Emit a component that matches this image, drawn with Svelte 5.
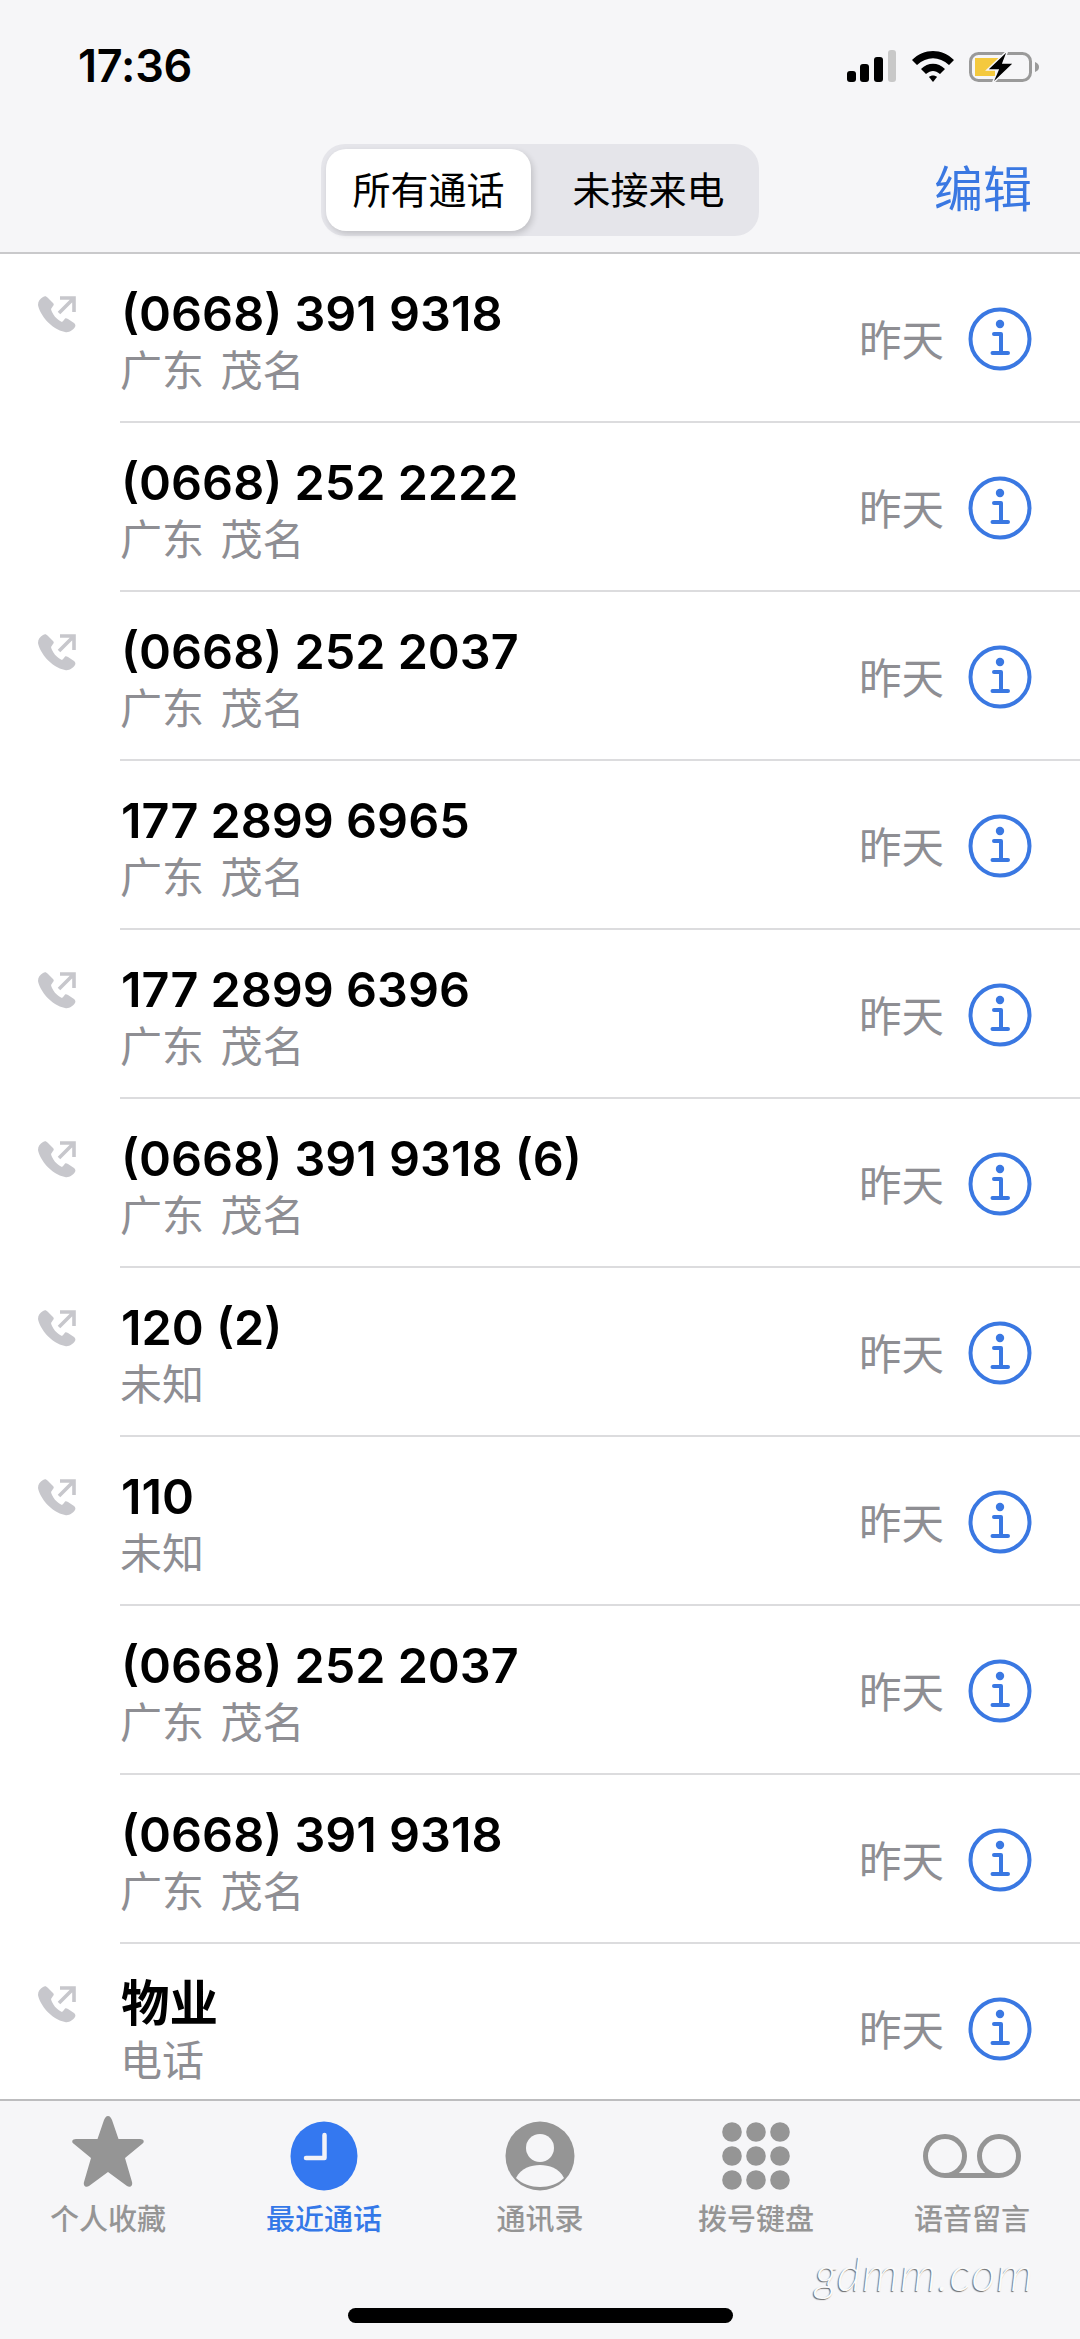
<script>
  // Recents list of the phone app
  const calls = [
    { name: '(0668) 391 9318', place: '广东 茂名', out: true },
    { name: '(0668) 252 2222', place: '广东 茂名' },
    { name: '(0668) 252 2037', place: '广东 茂名', out: true },
    { name: '177 2899 6965', place: '广东 茂名' },
    { name: '177 2899 6396', place: '广东 茂名', out: true },
    { name: '(0668) 391 9318 (6)', place: '广东 茂名', out: true },
    { name: '120 (2)', place: '未知', out: true },
    { name: '110', place: '未知', out: true },
    { name: '(0668) 252 2037', place: '广东 茂名' },
    { name: '(0668) 391 9318', place: '广东 茂名' },
    { name: '物业', place: '电话', out: true }
  ];

  const tabs = [
    { id: 'star', label: '个人收藏' },
    { id: 'clock', label: '最近通话', active: true },
    { id: 'person', label: '通讯录' },
    { id: 'keypad', label: '拨号键盘' },
    { id: 'voicemail', label: '语音留言' }
  ];
</script>

<div class="phone">
  <header>
    <div class="status">
      <span class="time">17:36</span>
      <div class="status-icons">
        <svg width="50" height="32" viewBox="0 0 50 32">
          <rect x="0" y="21" width="9" height="11" rx="3" fill="#000" />
          <rect x="13" y="14" width="9" height="18" rx="3" fill="#000" />
          <rect x="27" y="7" width="9" height="25" rx="3" fill="#000" />
          <rect x="41" y="0" width="8" height="32" rx="3" fill="#c8c8c8" />
        </svg>
        <svg width="44" height="32" viewBox="0 0 44 32">
          <path d="M1 10 C13 -2 31 -2 43 10 L38 15 C28 6 16 6 6 15 Z" fill="#000" />
          <path d="M10 19 C17 12 27 12 34 19 L29 24 C24 20 20 20 15 24 Z" fill="#000" />
          <path d="M18 27 C20 25 24 25 26 27 L22 32 Z" fill="#000" />
        </svg>
        <svg width="71" height="34" viewBox="0 0 71 34">
          <rect x="1.5" y="3.5" width="60" height="27" rx="8" fill="none" stroke="#9a9a9a" stroke-width="3" />
          <path d="M66 12 C69 13 70 15 70 17 C70 19 69 21 66 22 Z" fill="#9a9a9a" />
          <path d="M6 8 H32 L22 20 H26 V26 H6 Z" fill="#f4c93e" />
          <path d="M39 0 L18 20 H29 L23 34 L45 13 H34 Z" fill="#000" stroke="#f6f6f8" stroke-width="1.5" />
        </svg>
      </div>
    </div>
    <div class="nav">
      <div class="segments">
        <button class="seg selected">所有通话</button>
        <button class="seg other">未接来电</button>
      </div>
      <span class="edit">编辑</span>
    </div>
  </header>

  <ul class="list">
    {#each calls as call}
      <li>
        <div class="dir">
          {#if call.out}
            <svg width="38" height="38" viewBox="0 0 38 38">
              <path d="M5 2 C2 4 0 6 0 10 C2 20 13 34 27 37 C31 38 35 35 37 32 C38 30 37 29 36 28 L30 24 C28 23 27 23 26 25 L24 27 C19 25 14 19 13 14 L15 11 C16 10 16 9 15 8 L10 3 C8 1 7 1 5 2 Z" fill="#c7c7cc" />
              <path d="M21 18 L35 4 M22 3 H36 V17" fill="none" stroke="#c7c7cc" stroke-width="3.6" />
            </svg>
          {/if}
        </div>
        <div class="row-body">
          <div class="who">
            <div class="name">{call.name}</div>
            <div class="place">{call.place}</div>
          </div>
          <span class="when">昨天</span>
          <svg class="info" width="64" height="64" viewBox="0 0 64 64">
            <circle cx="32" cy="32" r="29.5" fill="none" stroke="#3a78e2" stroke-width="4" />
            <circle cx="32" cy="17" r="4.2" fill="#3a78e2" />
            <path d="M26 27 H33 V45 M24.5 46 H40" fill="none" stroke="#3a78e2" stroke-width="4" stroke-linecap="round" stroke-linejoin="round" />
          </svg>
        </div>
      </li>
    {/each}
  </ul>

  <nav class="tabbar">
    {#each tabs as tab}
      <div class="tab" class:active={tab.active}>
        <div class="tab-icon">
          {#if tab.id === 'star'}
            <svg class="star" width="74" height="74" viewBox="0 0 74 74">
              <path d="M37 2 C39 2 40 4 41 6 L47.5 25 H69 C73 25 74 28 71 30 L54 44 L61 68 C62 72 59 74 56 72 L37 58 L18 72 C15 74 12 72 13 68 L20 44 L3 30 C0 28 1 25 5 25 H26.5 L33 6 C34 4 35 2 37 2 Z" fill="#959595" />
            </svg>
          {:else if tab.id === 'clock'}
            <svg width="68" height="70" viewBox="0 0 68 70">
              <ellipse cx="34" cy="35" rx="33.5" ry="34.5" fill="#3478f0" />
              <path d="M34.5 14 V37 H16" fill="none" stroke="#f2f2f7" stroke-width="4.5" stroke-linecap="round" stroke-linejoin="round" />
            </svg>
          {:else if tab.id === 'person'}
            <svg width="70" height="70" viewBox="0 0 70 70">
              <circle cx="35" cy="35" r="34.5" fill="#959595" />
              <circle cx="35" cy="27" r="14" fill="#f6f6f8" />
              <path d="M11 57 C16 47 26 44 35 44 C44 44 54 47 59 57 C53 63 44 66 35 66 C26 66 17 63 11 57 Z" fill="#f6f6f8" />
            </svg>
          {:else if tab.id === 'keypad'}
            <svg width="68" height="68" viewBox="0 0 68 68">
              {#each [10, 34, 58] as cy}
                {#each [10, 34, 58] as cx}
                  <circle {cx} {cy} r="9.8" fill="#959595" />
                {/each}
              {/each}
            </svg>
          {:else}
            <svg width="98" height="46" viewBox="0 0 98 46">
              <circle cx="22" cy="23" r="19.5" fill="none" stroke="#959595" stroke-width="5" />
              <circle cx="76" cy="23" r="19.5" fill="none" stroke="#959595" stroke-width="5" />
              <path d="M22 42.5 H76" fill="none" stroke="#959595" stroke-width="5" />
            </svg>
          {/if}
        </div>
        <span class="tab-label">{tab.label}</span>
      </div>
    {/each}
  </nav>

  <div class="home-bar"></div>
  <span class="mark">gdmm.com</span>
</div>

<style>
  :global(body) {
    margin: 0;
    background: #fff;
  }

  .phone {
    position: relative;
    width: 1080px;
    height: 2339px;
    display: flex;
    flex-direction: column;
    overflow: hidden;
    font-family: Inter, "Noto Sans CJK SC", sans-serif;
    color: #000;
  }

  header {
    height: 254px;
    box-sizing: border-box;
    flex: none;
    background: #f6f6f8;
    border-bottom: 2px solid #c9c9cb;
  }

  .status {
    height: 132px;
    box-sizing: border-box;
    padding: 44px 40px 0 78px;
    display: flex;
    justify-content: space-between;
    align-items: flex-start;
  }

  .time {
    font-size: 45px;
    line-height: 44px;
    font-weight: 580;
    letter-spacing: -0.2px;
  }

  .status-icons {
    display: flex;
    align-items: flex-start;
    gap: 14px;
    margin-top: 6px;
  }

  .nav {
    position: relative;
    display: flex;
    justify-content: center;
    padding-top: 12px;
  }

  .segments {
    display: flex;
    width: 438px;
    height: 92px;
    box-sizing: border-box;
    padding: 5px;
    border-radius: 24px;
    background: #e5e5ea;
  }

  .seg {
    flex: 1;
    border: none;
    background: none;
    padding: 0 0 6px;
    font: 400 38px "Noto Sans CJK SC", sans-serif;
    color: #000;
  }

  .seg.other {
    padding-left: 12px;
  }

  .seg.selected {
    flex: none;
    width: 205px;
    height: 82px;
    border-radius: 20px;
    background: #fff;
    box-shadow: 2px 3px 6px rgba(0, 0, 0, 0.16);
  }

  .edit {
    position: absolute;
    right: 48px;
    top: 18px;
    font: 400 49px/72px "Noto Sans CJK SC", sans-serif;
    color: #3a78e2;
  }

  .list {
    flex: 1;
    min-height: 0;
    margin: 0;
    padding: 0;
    list-style: none;
    overflow: hidden;
  }

  li {
    display: flex;
    height: 169px;
  }

  .dir {
    width: 120px;
    flex: none;
    box-sizing: border-box;
    padding: 41px 0 0 38px;
  }

  .row-body {
    flex: 1;
    display: flex;
    align-items: center;
    padding-right: 48px;
    border-bottom: 2px solid #dcdcde;
  }

  .who {
    flex: 1;
    min-width: 0;
    padding-top: 1px;
  }

  .name {
    font-size: 48.5px;
    line-height: 55px;
    padding: 4px 0 0 1px;
    font-weight: 580;
    color: #000;
  }

  .place {
    font: 400 42px/54px "Noto Sans CJK SC", sans-serif;
    word-spacing: 7px;
    color: #8e8e93;
  }

  .when {
    font: 400 42.5px "Noto Sans CJK SC", sans-serif;
    color: #8e8e93;
    margin-right: 24px;
  }

  .info {
    flex: none;
    margin-top: 2px;
  }

  .tabbar {
    flex: none;
    height: 240px;
    box-sizing: border-box;
    display: grid;
    grid-template-columns: repeat(5, 1fr);
    background: #f6f6f8;
    border-top: 2px solid #bdbdbf;
    padding-top: 17px;
    align-items: start;
  }

  .tab {
    display: flex;
    flex-direction: column;
    align-items: center;
    color: #959595;
  }

  .tab.active {
    color: #3478e8;
  }

  .tab-icon {
    height: 76px;
    display: flex;
    align-items: center;
    justify-content: center;
  }

  .star {
    margin-top: -10px;
  }

  .tab-label {
    font: 500 29px/40px "Noto Sans CJK SC", sans-serif;
    margin-top: 3px;
  }

  .home-bar {
    position: absolute;
    left: 348px;
    bottom: 16px;
    width: 385px;
    height: 15px;
    border-radius: 8px;
    background: #000;
  }

  .mark {
    position: absolute;
    left: 815px;
    top: 2245px;
    font: italic 300 47px Lato, sans-serif;
    letter-spacing: 1px;
    color: #fbfbfb;
    text-shadow: -1px 1px 1px #6a6a6a;
  }
</style>
